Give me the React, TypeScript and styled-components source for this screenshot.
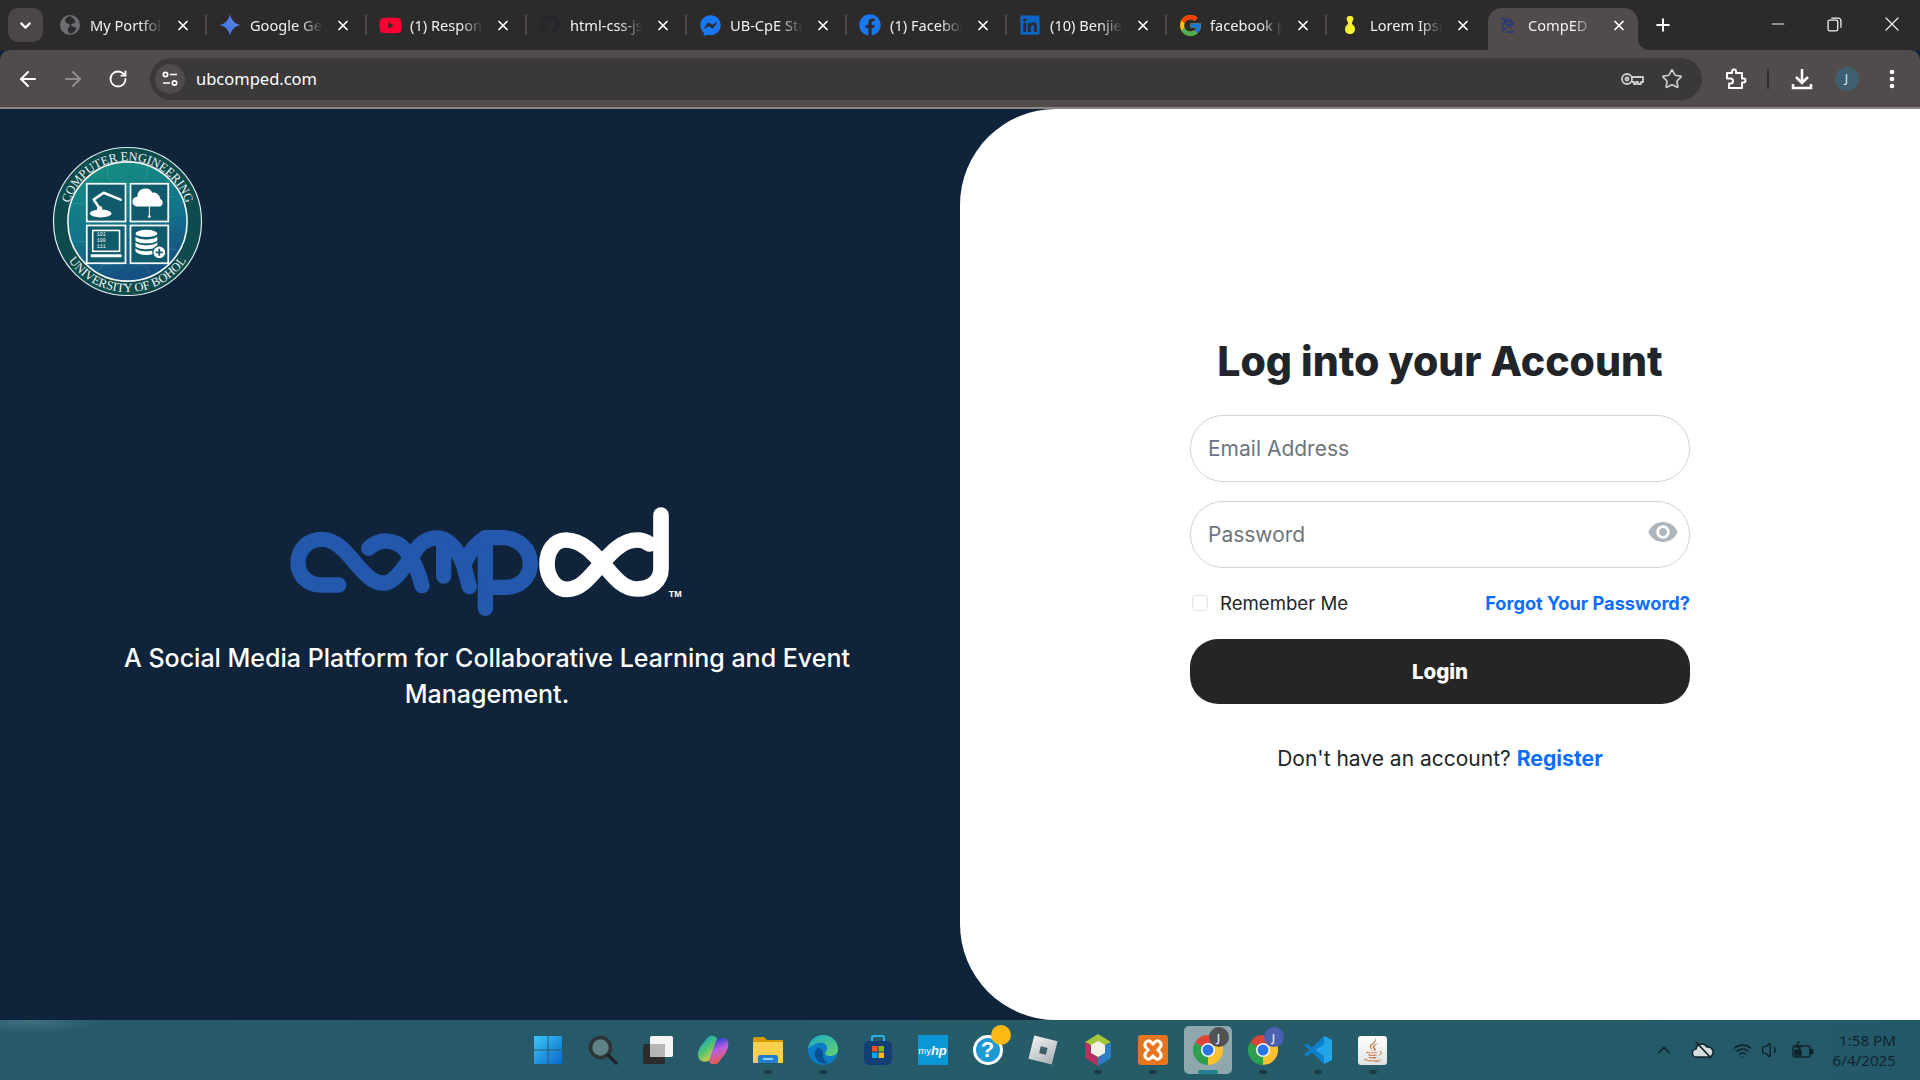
import React from "react";
import styled, { createGlobalStyle } from "styled-components";
import {
  ArrowLeft,
  ArrowRight,
  ChevronDown,
  ChevronUp,
  EllipsisVertical,
  Minus,
  Plus,
  RotateCw,
  Star,
  Volume1,
  Wifi,
  X,
} from "lucide-react";
import { FaFacebook, FaFacebookMessenger, FaGithub, FaJava, FaLinkedin, FaYoutube } from "react-icons/fa";
import { FcGoogle } from "react-icons/fc";
import { MdRemoveRedEye } from "react-icons/md";

const GlobalStyle = createGlobalStyle`
  html, body {
    margin: 0;
    padding: 0;
    width: 1920px;
    height: 1080px;
    overflow: hidden;
    background: #0f233a;
    font-family: Inter, "Noto Sans", sans-serif;
  }
  * { box-sizing: border-box; }
`;

const Screen = styled.div`
  width: 1920px;
  height: 1080px;
  display: flex;
  flex-direction: column;
`;

/* ---- browser chrome ---- */

const TabStrip = styled.div`
  height: 50px;
  flex: none;
  background: #2d2a2b;
  display: flex;
  align-items: flex-end;
  padding-left: 8px;
`;

const TabSearch = styled.button`
  width: 35px;
  height: 34px;
  margin: 0 3px 8px 0;
  padding: 0;
  border: 0;
  border-radius: 10px;
  background: #4b4747;
  color: #fff;
  display: flex;
  align-items: center;
  justify-content: center;
`;

const Tab = styled.div<{ $active?: boolean; $divider?: boolean }>`
  position: relative;
  flex: none;
  display: flex;
  align-items: center;
  height: 42px;
  width: ${({ $active }) => ($active ? "150px" : "160px")};
  margin: ${({ $active }) => ($active ? "0 2px" : "0")};
  padding: ${({ $active }) => ($active ? "0 11px 0 11px" : "0 15px 0 16px")};
  padding-bottom: 8px;
  background: ${({ $active }) => ($active ? "#514c4b" : "transparent")};
  border-radius: 14px 14px 0 0;

  &::after {
    content: "";
    display: ${({ $divider }) => ($divider ? "block" : "none")};
    position: absolute;
    right: -1px;
    top: 7px;
    width: 2px;
    height: 20px;
    background: #4a4646;
  }

  &::before {
    content: "";
    display: ${({ $active }) => ($active ? "block" : "none")};
    position: absolute;
    right: -12px;
    bottom: 0;
    width: 12px;
    height: 12px;
    background: radial-gradient(circle at 100% 0, transparent 12px, #514c4b 12.5px);
  }
`;

const Favicon = styled.span<{ $color?: string }>`
  flex: none;
  width: 16px;
  height: 18px;
  display: flex;
  align-items: center;
  justify-content: center;
  color: ${({ $color }) => $color || "#fff"};

  svg {
    flex: none;
  }
`;

const TabTitle = styled.span<{ $active?: boolean }>`
  flex: 1;
  min-width: 0;
  margin: 0 ${({ $active }) => ($active ? "10px" : "4px")} 0 ${({ $active }) => ($active ? "13px" : "12px")};
  font-family: "Noto Sans", sans-serif;
  font-size: 14.6px;
  color: #f1f0f0;
  white-space: nowrap;
  overflow: hidden;
  mask-image: linear-gradient(90deg, #000 62%, transparent 90%);
`;

const TabClose = styled.span`
  flex: none;
  width: 16px;
  height: 16px;
  display: flex;
  align-items: center;
  justify-content: center;
  color: #fff;
`;

const NewTab = styled.span`
  width: 34px;
  height: 34px;
  margin: 0 0 8px 6px;
  display: flex;
  align-items: center;
  justify-content: center;
  color: #fff;
`;

const WindowControls = styled.div`
  margin-left: auto;
  align-self: flex-start;
  display: flex;
`;

const WindowButton = styled.span`
  width: 57px;
  height: 48px;
  display: flex;
  align-items: center;
  justify-content: center;
  color: #f2f2f2;
`;

const Toolbar = styled.div`
  height: 59px;
  flex: none;
  background: #514c4b;
  border-radius: 10px 10px 0 0;
  border-bottom: 2px solid #8b8684;
  display: flex;
  align-items: center;
  padding: 0 6px 0 5px;
`;

const ToolButton = styled.span<{ $dim?: boolean }>`
  flex: none;
  width: 45px;
  height: 40px;
  display: flex;
  align-items: center;
  justify-content: center;
  color: ${({ $dim }) => ($dim ? "#8f8b8a" : "#fff")};
`;

const Omnibox = styled.div`
  flex: 1;
  height: 42px;
  margin: 0 10px 0 10px;
  padding: 0 14px 0 5px;
  border-radius: 21px;
  background: #3b3838;
  display: flex;
  align-items: center;
`;

const SiteInfo = styled.span`
  flex: none;
  width: 30px;
  height: 30px;
  border-radius: 50%;
  background: #514c4b;
  display: flex;
  align-items: center;
  justify-content: center;
`;

const Url = styled.span`
  flex: 1;
  margin-left: 11px;
  font-family: "Noto Sans", sans-serif;
  font-size: 16.5px;
  color: #fff;
`;

const OmniAction = styled.span<{ $gap?: boolean }>`
  flex: none;
  width: 32px;
  margin-left: ${({ $gap }) => ($gap ? "8px" : "0")};
  display: flex;
  justify-content: center;
  color: #cfcdcc;
`;

const ToolDivider = styled.span`
  flex: none;
  width: 2px;
  height: 20px;
  margin: 0 10px;
  background: #302d2d;
`;

const Avatar = styled.span`
  width: 24px;
  height: 24px;
  border-radius: 50%;
  background: #3f5f70;
  color: #e6eef2;
  font-family: "Noto Sans", sans-serif;
  font-size: 12px;
  display: flex;
  align-items: center;
  justify-content: center;
`;

/* ---- page ---- */

const Page = styled.main`
  flex: 1;
  min-height: 0;
  display: flex;
  background: #0f233a;
`;

const BrandPanel = styled.section`
  width: 960px;
  padding-top: 37px;
  display: flex;
  flex-direction: column;
  align-items: flex-start;
`;

const Seal = styled.svg`
  width: 151px;
  height: 151px;
  margin-left: 52px;
  display: block;
`;

const Brand = styled.div`
  width: 790px;
  margin: 193px 0 0 92px;
  display: flex;
  flex-direction: column;
  align-items: center;
`;

const Wordmark = styled.svg`
  width: 430px;
  height: 140px;
  display: block;
`;

const Tagline = styled.p`
  margin: 10px 0 0;
  color: #fff;
  font-size: 25px;
  font-weight: 500;
  line-height: 36px;
  text-align: center;
`;

const LoginPanel = styled.section`
  width: 960px;
  background: #fff;
  border-radius: 96px 0 0 96px;
  padding-top: 222px;
  display: flex;
  flex-direction: column;
  align-items: center;
`;

const Heading = styled.h1`
  margin: 0 0 24px;
  font-size: 41px;
  line-height: 60px;
  font-weight: 800;
  color: #212529;
`;

const Form = styled.form`
  width: 500px;
  display: flex;
  flex-direction: column;
`;

const Field = styled.div`
  position: relative;
  margin-bottom: 19px;
`;

const Input = styled.input`
  width: 100%;
  height: 67px;
  padding: 0 17px;
  border: 1px solid #ced4da;
  border-radius: 33px;
  background: #fff;
  font-family: inherit;
  font-size: 21px;
  color: #212529;
  outline: none;

  &::placeholder {
    color: #6c757d;
    opacity: 1;
  }
`;

const EyeToggle = styled.span`
  position: absolute;
  right: 11px;
  top: 15px;
  color: #adb5bd;
  display: flex;
`;

const Options = styled.div`
  display: flex;
  align-items: center;
  justify-content: space-between;
  height: 32px;
  margin-bottom: 20px;
`;

const Remember = styled.label`
  display: flex;
  align-items: center;
  padding-left: 2px;
  font-size: 18.6px;
  color: #212529;
`;

const CheckBox = styled.input`
  appearance: none;
  width: 16px;
  height: 16px;
  margin: 0 12px 0 0;
  border: 1px solid #dee2e6;
  border-radius: 4px;
  background: #fff;
`;

const TextLink = styled.a<{ $size: number }>`
  color: #0d6efd;
  font-size: ${({ $size }) => $size}px;
  font-weight: 700;
  text-decoration: none;
`;

const LoginButton = styled.button`
  height: 65px;
  border: 0;
  border-radius: 28px;
  background: #252525;
  color: #fff;
  font-family: inherit;
  font-size: 20.5px;
  font-weight: 800;
`;

const RegisterLine = styled.p`
  margin: 38px 0 0;
  font-size: 21px;
  line-height: 32px;
  text-align: center;
  color: #212529;
`;

/* ---- taskbar ---- */

const Taskbar = styled.footer`
  height: 60px;
  flex: none;
  display: grid;
  grid-template-columns: 1fr 880px 1fr;
  align-items: center;
  background:
    radial-gradient(ellipse 70px 14px at 30px 0, rgba(170, 210, 215, 0.2), transparent),
    linear-gradient(90deg, #27596a 0%, #265b68 60%, #24596a 100%);
`;

const Dock = styled.div`
  grid-column: 2;
  display: flex;
  align-self: stretch;
`;

const DockItem = styled.div<{ $active?: boolean }>`
  position: relative;
  width: 55px;
  display: flex;
  align-items: center;
  justify-content: center;

  &::before {
    content: "";
    display: ${({ $active }) => ($active ? "block" : "none")};
    position: absolute;
    left: 4px;
    right: 3px;
    top: 6px;
    bottom: 6px;
    border-radius: 5px;
    background: #8ea8ad;
  }
`;

const DockGlyph = styled.span`
  position: relative;
  width: 32px;
  height: 32px;
  display: flex;
  align-items: center;
  justify-content: center;
`;

const RunDot = styled.span<{ $active?: boolean }>`
  position: absolute;
  left: 50%;
  bottom: 6px;
  width: ${({ $active }) => ($active ? "20px" : "8px")};
  height: 4px;
  margin-left: ${({ $active }) => ($active ? "-10px" : "-4px")};
  border-radius: 2px;
  background: ${({ $active }) => ($active ? "#22808f" : "#1b3a43")};
`;

const ProfileBadge = styled.span<{ $color: string }>`
  position: absolute;
  right: -5px;
  top: -7px;
  width: 20px;
  height: 20px;
  border-radius: 50%;
  background: ${({ $color }) => $color};
  color: #dfe3f2;
  font-family: "Noto Sans", sans-serif;
  font-size: 11px;
  font-weight: 600;
  display: flex;
  align-items: center;
  justify-content: center;
`;

const Notice = styled.span`
  position: absolute;
  right: -7px;
  top: -9px;
  width: 20px;
  height: 20px;
  border-radius: 50%;
  background: #fdb913;
`;

const HelpGlyph = styled.span`
  width: 30px;
  height: 30px;
  border: 3px solid #fff;
  border-radius: 50%;
  background: #1d9ad6;
  color: #fff;
  font-family: "Liberation Sans", sans-serif;
  font-size: 22px;
  font-weight: 700;
  display: flex;
  align-items: center;
  justify-content: center;
`;

const RobloxGlyph = styled.span`
  width: 24px;
  height: 24px;
  transform: rotate(14deg);
  background: linear-gradient(135deg, #f2f2f2, #a9b2b6);
  display: flex;
  align-items: center;
  justify-content: center;

  &::after {
    content: "";
    width: 7px;
    height: 7px;
    background: #3f5f68;
  }
`;

const HpTile = styled.span`
  width: 30px;
  height: 30px;
  background: #0b96d6;
  color: #fff;
  font-family: "Liberation Sans", sans-serif;
  font-size: 9.5px;
  display: flex;
  align-items: center;
  justify-content: center;
`;

const HpMark = styled.span`
  font-size: 13px;
  font-style: italic;
  font-weight: 700;
`;

const JavaTile = styled.span`
  width: 29px;
  height: 29px;
  border-radius: 3px;
  background: linear-gradient(#fff, #dfe3e4);
  color: #c5662a;
  display: flex;
  align-items: center;
  justify-content: center;
`;

const Tray = styled.div`
  grid-column: 3;
  display: flex;
  align-items: center;
  justify-content: flex-end;
  padding-right: 24px;
  color: #0f2228;
`;

const TraySlot = styled.span<{ $width: number }>`
  width: ${({ $width }) => $width}px;
  display: flex;
  justify-content: center;
`;

const Clock = styled.div`
  margin-left: 13px;
  text-align: right;
  font-family: "Noto Sans", sans-serif;
  font-size: 15.2px;
  line-height: 20px;
  color: #10252d;
`;

/* ---- drawn icons ---- */

const GlobeIcon = () => (
  <svg width="20" height="20" viewBox="0 0 18 18">
    <circle cx="9" cy="9" r="9" fill="#6b6f74" />
    <path d="M9 1c-3 1-5 3-4 5 1 2 3 1 4 3 0 2-2 2-2 5l2 3c3-1 5-2 6-5-2-2-4-1-5-3 0-2 3-1 4-3-1-2-3-4-5-5z" fill="#2d2a2b" />
  </svg>
);

const GeminiIcon = () => (
  <svg width="22" height="22" viewBox="0 0 20 20">
    <defs>
      <linearGradient id="gem" x1="0" y1="1" x2="1" y2="0">
        <stop offset="0" stopColor="#2f7ce6" />
        <stop offset="1" stopColor="#6f7de0" />
      </linearGradient>
    </defs>
    <path d="M10 0c1 5.500 4 9 10 10-6 1-9 4.500-10 10-1-5.500-4-9-10-10 6-1 9-4.500 10-10z" fill="url(#gem)" />
  </svg>
);

const SnapIcon = () => (
  <svg width="14" height="22" viewBox="0 0 14 20">
    <path d="M7 1c3 0 4 2 3 4.500-.6 1.500-1.500 2.500-1 3.500 1 1 3 2 3 5 0 3-2 5-5 5s-5-2-5-5c0-3 2-4 3-5 .5-1-.4-2-1-3.500C3 3 4 1 7 1z" fill="#f5ef2f" />
  </svg>
);

const CompedIcon = () => (
  <svg width="16" height="18" viewBox="0 0 16 18" fill="none" stroke="#283b78" strokeWidth="2">
    <path d="M2 2l5 1-2 4 6-3 3 4-6 1 5 3M3 10l3 3-3 2M7 16h8" />
  </svg>
);

const KeyIcon = () => (
  <svg width="24" height="16" viewBox="0 0 24 16" fill="none" stroke="currentColor" strokeWidth="1.800">
    <circle cx="7" cy="8" r="5" />
    <circle cx="7" cy="8" r="1.500" />
    <path d="M12 6h11v5h-2v2h-3v-2h-2v2h-2v-2h-2" strokeLinejoin="round" />
  </svg>
);

const PuzzleIcon = () => (
  <svg width="24" height="24" viewBox="0 0 24 24" fill="none" stroke="#fff" strokeWidth="2" strokeLinejoin="round">
    <path d="M4 6h5V4.500a2 2 0 0 1 4 0V6h6v5.500h1.500a2 2 0 0 1 0 4H19V21H6v-4.500h1.500a2.500 2.500 0 0 0 0-5H4z" />
  </svg>
);

const DownloadIcon = () => (
  <svg width="24" height="24" viewBox="0 0 24 24" fill="none" stroke="#fff" strokeWidth="2.500">
    <path d="M12 2v13M6 10l6 6 6-6" />
    <path d="M3 17v4h18v-4" />
  </svg>
);

const TuneIcon = () => (
  <svg width="18" height="18" viewBox="0 0 18 18" fill="none" stroke="#fff" strokeWidth="1.700">
    <circle cx="4.500" cy="4.500" r="2.200" />
    <path d="M9 4.500h7M2 13h7" />
    <circle cx="13.500" cy="13" r="2.200" />
  </svg>
);

const RestoreIcon = () => (
  <svg width="15" height="15" viewBox="0 0 14 14" fill="none" stroke="currentColor" strokeWidth="1.200">
    <rect x="1" y="3" width="9" height="10" rx="1.500" />
    <path d="M4 1h6.500A2.500 2.500 0 0 1 13 3.500V10" />
  </svg>
);

const WindowsLogo = () => (
  <svg width="30" height="30" viewBox="0 0 30 30">
    <defs>
      <linearGradient id="win" x1="0" y1="0" x2="1" y2="1">
        <stop offset="0" stopColor="#3cc6fb" />
        <stop offset="1" stopColor="#0869c8" />
      </linearGradient>
    </defs>
    <path d="M1 1h13.500v13.500H1zM15.500 1H29v13.500H15.500zM1 15.500h13.500V29H1zM15.500 15.500H29V29H15.500z" fill="url(#win)" />
  </svg>
);

const SearchGlyph = () => (
  <svg width="30" height="30" viewBox="0 0 30 30">
    <circle cx="12.500" cy="12.500" r="10" fill="#5f8288" stroke="#2e3436" strokeWidth="3.500" />
    <path d="M20 20l8 8" stroke="#1f2527" strokeWidth="3.500" strokeLinecap="round" />
  </svg>
);

const TaskViewGlyph = () => (
  <svg width="32" height="30" viewBox="0 0 32 30">
    <rect x="1" y="9" width="22" height="20" rx="2" fill="#2c2c2c" />
    <rect x="8" y="1" width="23" height="21" rx="2" fill="#f4f4f4" />
    <rect x="8" y="9" width="15" height="13" fill="#b5b5b5" />
  </svg>
);

const CopilotGlyph = () => (
  <svg width="32" height="30" viewBox="0 0 32 30">
    <defs>
      <linearGradient id="copA" x1="0.2" y1="0" x2="0.8" y2="1">
        <stop offset="0" stopColor="#0f9be8" />
        <stop offset="0.5" stopColor="#53c46a" />
        <stop offset="1" stopColor="#f8d040" />
      </linearGradient>
      <linearGradient id="copB" x1="0.3" y1="0" x2="0.6" y2="1">
        <stop offset="0" stopColor="#1b3fd0" />
        <stop offset="0.45" stopColor="#b95fe4" />
        <stop offset="1" stopColor="#f4592f" />
      </linearGradient>
    </defs>
    <path d="M11 2c3-2 8-2 9 2l-7 20c-2 4-9 3-11 0-2-4-1-9 2-13z" fill="url(#copA)" />
    <path d="M21 28c-3 2-8 2-9-2l7-20c2-4 10-4 12 0 1 4 0 8-3 13z" fill="url(#copB)" />
  </svg>
);

const FolderGlyph = () => (
  <svg width="32" height="28" viewBox="0 0 32 28">
    <path d="M1 3a2 2 0 0 1 2-2h9l3 3h16v6H1z" fill="#d99a08" />
    <path d="M1 6h30v20a1 1 0 0 1-1 1H2a1 1 0 0 1-1-1z" fill="#fbd04f" />
    <path d="M8 19h16a2 2 0 0 1 2 2v6H6v-6a2 2 0 0 1 2-2z" fill="#1f7fd0" />
    <rect x="11" y="22" width="10" height="2" fill="#8fd0f5" />
  </svg>
);

const EdgeGlyph = () => (
  <svg width="32" height="32" viewBox="0 0 32 32">
    <defs>
      <linearGradient id="edgeA" x1="0" y1="0" x2="1" y2="1">
        <stop offset="0" stopColor="#1aa7c9" />
        <stop offset="1" stopColor="#66d36e" />
      </linearGradient>
    </defs>
    <circle cx="16" cy="16" r="15" fill="#0c7cc8" />
    <path d="M1 15C2 6 9 1 16 1c8 0 15 6 15 14 0 5-4 7-8 7-3 0-5-1-5-3 1-2 2-2 2-5 0-4-4-6-8-5-6 1-9 4-11 6z" fill="url(#edgeA)" />
    <path d="M11 14c-4 2-5 9 0 13 3 2 7 3 11 2-4-1-7-5-6-9 0-3-2-6-5-6z" fill="#0a4f92" />
  </svg>
);

const StoreGlyph = () => (
  <svg width="30" height="30" viewBox="0 0 30 30">
    <path d="M9 7V3a2 2 0 0 1 2-2h8a2 2 0 0 1 2 2v4" fill="none" stroke="#2bb5e8" strokeWidth="2" />
    <rect x="1" y="6" width="28" height="24" rx="5" fill="#123f74" />
    <rect x="9" y="11" width="5.500" height="5.500" fill="#f25022" />
    <rect x="15.500" y="11" width="5.500" height="5.500" fill="#7fba00" />
    <rect x="9" y="17.500" width="5.500" height="5.500" fill="#00a4ef" />
    <rect x="15.500" y="17.500" width="5.500" height="5.500" fill="#ffb900" />
  </svg>
);

const NetbeansGlyph = () => (
  <svg width="28" height="32" viewBox="0 0 28 32">
    <path d="M14 0l13 8-13 7L1 8z" fill="#a4c639" />
    <path d="M1 8l13 7v17L1 24z" fill="#b5315f" />
    <path d="M27 8L14 15v17l13-8z" fill="#2a7fc4" />
    <path d="M14 7l7 4v8l-7 4-7-4v-8z" fill="#f3f1e4" />
  </svg>
);

const XamppGlyph = () => (
  <svg width="30" height="30" viewBox="0 0 30 30">
    <rect width="30" height="30" rx="3" fill="#e8741e" />
    <path d="M8 7c3-3 5 0 7 2 2-2 4-5 7-2s0 6-2 8c2 2 5 5 2 8s-5 0-7-2c-2 2-4 5-7 2s0-6 2-8C8 13 5 10 8 7z" fill="none" stroke="#fff" strokeWidth="3" />
  </svg>
);

const ChromeGlyph = () => (
  <svg width="30" height="30" viewBox="0 0 24 24">
    <path d="M12 12L1.600 6A12 12 0 0 1 22.400 6z" fill="#db4437" />
    <path d="M12 12L22.400 6A12 12 0 0 1 12 24z" fill="#fbc02d" />
    <path d="M12 12V24A12 12 0 0 1 1.600 6z" fill="#2e9e4f" />
    <circle cx="12" cy="12" r="5.600" fill="#fff" />
    <circle cx="12" cy="12" r="4.400" fill="#2a73e8" />
  </svg>
);

const VscodeGlyph = () => (
  <svg width="30" height="30" viewBox="0 0 30 30">
    <path d="M21 1l8 4v20l-8 4L9 17.500l-5 4-3-2 6-4.500-6-4.500 3-2 5 4z" fill="#0f7fc9" />
    <path d="M21 1l8 4v20l-8 4V9.500L12.500 15 21 21z" fill="#23a5ea" />
  </svg>
);

const CloudOffGlyph = () => (
  <svg width="22" height="18" viewBox="0 0 22 18">
    <path d="M5 16a4 4 0 0 1-1-8 6 6 0 0 1 11-2 5 5 0 0 1 2 10z" fill="#d7dcdc" stroke="#10252d" strokeWidth="1.500" />
    <path d="M4 1l15 16" stroke="#10252d" strokeWidth="1.800" />
  </svg>
);

const BatteryGlyph = () => (
  <svg width="22" height="18" viewBox="0 0 22 18" fill="none" stroke="#0f2228" strokeWidth="1.300">
    <rect x="1" y="5" width="17" height="11" rx="2" />
    <rect x="18" y="8.500" width="2.500" height="4" fill="#0f2228" />
    <rect x="3" y="9" width="6" height="5" fill="#0f2228" />
    <path d="M7 0L4 6h4l-2 5" strokeWidth="1.600" />
  </svg>
);

const Emblem = () => (
  <Seal viewBox="-76 -76 152 152">
    <defs>
      <linearGradient id="sealDisc" x1="0.1" y1="0" x2="0.4" y2="1">
        <stop offset="0" stopColor="#15907e" />
        <stop offset="0.55" stopColor="#12758b" />
        <stop offset="1" stopColor="#155082" />
      </linearGradient>
      <path id="sealTop" d="M-61.500 0A61.500 61.500 0 0 1 61.500 0" />
      <path id="sealBottom" d="M-71 0A71 71 0 0 0 71 0" />
    </defs>
    <circle r="74.500" fill="#0e4b4d" stroke="#dfeeee" strokeWidth="1.200" />
    <circle r="60" fill="url(#sealDisc)" stroke="#f2f7f7" strokeWidth="1.600" />
    <g fill="none" stroke="#7fd0c8" strokeWidth="0.500" opacity="0.45">
      <path d="M-55 -18h10l6-6M-52 20h9l5 5M-20 -54v9l5 5M20 -55v8l-4 5M48 -25h-7l-4 4M50 28h-8l-4 -4M-30 50l6 -7h8M22 52l-5 -8h-7" />
    </g>
    <g fontFamily='"Liberation Serif", serif' fill="#f1f6f6" fontSize="12.500">
      <text textAnchor="middle">
        <textPath href="#sealTop" startOffset="50%">COMPUTER ENGINEERING</textPath>
      </text>
      <text textAnchor="middle">
        <textPath href="#sealBottom" startOffset="50%">UNIVERSITY OF BOHOL</textPath>
      </text>
    </g>
    <g fill="#0f5a6b" stroke="#f4f8f8" strokeWidth="1.800">
      <rect x="-41" y="-38" width="39" height="38" />
      <rect x="3" y="-38" width="38" height="38" />
      <rect x="-41" y="4" width="39" height="38" />
      <rect x="3" y="4" width="38" height="38" />
    </g>
    {/* robot arm */}
    <g fill="none" stroke="#fff" strokeWidth="2.600" strokeLinecap="round" strokeLinejoin="round">
      <path d="M-28 -13L-34 -22L-24 -29L-7 -22" />
    </g>
    <ellipse cx="-27" cy="-8" rx="11" ry="4" fill="#fff" />
    <circle cx="-28" cy="-13" r="2.600" fill="#fff" />
    {/* cloud */}
    <path d="M10 -15a5 5 0 0 1 0 -10 8 8 0 0 1 15 -4 7 7 0 0 1 8 6 4.500 4.500 0 0 1 0 8z" fill="#fff" />
    <path d="M22 -15v10" stroke="#fff" strokeWidth="1" fill="none" />
    <circle cx="22" cy="-5" r="1.400" fill="#fff" />
    {/* monitor */}
    <rect x="-35" y="9" width="27" height="21" fill="none" stroke="#fff" strokeWidth="1.600" />
    <rect x="-37" y="33" width="31" height="3" fill="#fff" />
    <g fill="#fff" fontFamily='"Liberation Mono", monospace' fontSize="5">
      <text x="-31" y="15">101</text>
      <text x="-31" y="21">100</text>
      <text x="-31" y="27">111</text>
    </g>
    {/* database */}
    <g fill="#fff">
      <ellipse cx="19" cy="12" rx="11" ry="3.600" />
      <path d="M8 15c3 4 19 4 22 0v4c-3 4-19 4-22 0z" />
      <path d="M8 21c3 4 19 4 22 0v4c-3 4-19 4-22 0z" />
      <path d="M8 27c3 4 19 4 22 0v3c-3 5-19 5-22 0z" />
      <circle cx="32" cy="31" r="6.500" stroke="#0f5a6b" strokeWidth="1.200" />
    </g>
    <path d="M32 27.500v7M28.500 31h7" stroke="#0f5a6b" strokeWidth="1.800" />
  </Seal>
);

const CompedLogo = () => (
  <Wordmark viewBox="0 0 1290 420">
    <g fill="none" stroke="#2358ad" strokeWidth="46" strokeLinecap="round" strokeLinejoin="round">
      <path d="M200 285H150C105 285 78 255 78 218C78 178 108 148 150 148C195 148 225 190 255 225C285 260 310 285 345 278C375 270 400 225 425 190" />
      <path d="M290 175C320 145 370 145 400 180C425 210 440 245 450 287" />
      <path d="M425 190C445 155 475 140 505 145C535 150 560 185 575 225L592 290" />
      <path d="M515 170V258" />
      <path d="M575 225C590 190 610 160 640 145" />
      <path d="M640 150V355" />
      <path d="M640 143H690C745 143 775 183 775 220C775 262 745 292 700 292H655" />
    </g>
    <g fill="none" stroke="#fff" strokeWidth="47" strokeLinecap="round" strokeLinejoin="round">
      <path d="M1167 75V235C1167 275 1135 297 1095 297C1055 297 1030 265 1000 230C965 190 930 150 882 150C845 150 825 185 825 222C825 262 850 298 885 298C925 298 950 265 985 225C1015 190 1050 150 1095 150C1110 150 1122 154 1132 162" />
    </g>
    <text x="1190" y="322" fill="#fff" fontSize="27" fontWeight="700" fontFamily='"Liberation Sans", sans-serif'>TM</text>
  </Wordmark>
);

const tabs = [
  { title: "My Portfolio", icon: <GlobeIcon /> },
  { title: "Google Gemini", icon: <GeminiIcon /> },
  { title: "(1) Responsive", icon: <FaYoutube size={23} color="#ff0033" /> },
  { title: "html-css-js", icon: <FaGithub size={20} color="#25262b" /> },
  { title: "UB-CpE Students", icon: <FaFacebookMessenger size={21} color="#1877f2" /> },
  { title: "(1) Facebook", icon: <FaFacebook size={22} color="#1877f2" /> },
  { title: "(10) Benjie", icon: <FaLinkedin size={22} color="#0a66c2" /> },
  { title: "facebook post", icon: <FcGoogle size={25} /> },
  { title: "Lorem Ipsum", icon: <SnapIcon /> },
];

export default function App() {
  return (
    <Screen>
      <GlobalStyle />
      <TabStrip>
        <TabSearch type="button">
          <ChevronDown size={17} strokeWidth={3} />
        </TabSearch>
        {tabs.map((tab, index) => (
          <Tab key={tab.title} $divider={index < tabs.length - 1}>
            <Favicon>{tab.icon}</Favicon>
            <TabTitle>{tab.title}</TabTitle>
            <TabClose>
              <X size={17} strokeWidth={2.6} />
            </TabClose>
          </Tab>
        ))}
        <Tab $active>
          <Favicon>
            <CompedIcon />
          </Favicon>
          <TabTitle $active>CompED - Login</TabTitle>
          <TabClose>
            <X size={17} strokeWidth={2.6} />
          </TabClose>
        </Tab>
        <NewTab>
          <Plus size={20} strokeWidth={2.4} />
        </NewTab>
        <WindowControls>
          <WindowButton>
            <Minus size={20} strokeWidth={1.3} />
          </WindowButton>
          <WindowButton>
            <RestoreIcon />
          </WindowButton>
          <WindowButton>
            <X size={24} strokeWidth={1.2} />
          </WindowButton>
        </WindowControls>
      </TabStrip>

      <Toolbar>
        <ToolButton>
          <ArrowLeft size={24} strokeWidth={2} />
        </ToolButton>
        <ToolButton $dim>
          <ArrowRight size={24} strokeWidth={2} />
        </ToolButton>
        <ToolButton>
          <RotateCw size={20} strokeWidth={2.2} />
        </ToolButton>
        <Omnibox>
          <SiteInfo>
            <TuneIcon />
          </SiteInfo>
          <Url>ubcomped.com</Url>
          <OmniAction>
            <KeyIcon />
          </OmniAction>
          <OmniAction $gap>
            <Star size={22} strokeWidth={1.8} />
          </OmniAction>
        </Omnibox>
        <ToolButton>
          <PuzzleIcon />
        </ToolButton>
        <ToolDivider />
        <ToolButton>
          <DownloadIcon />
        </ToolButton>
        <ToolButton>
          <Avatar>J</Avatar>
        </ToolButton>
        <ToolButton>
          <EllipsisVertical size={24} strokeWidth={2.6} />
        </ToolButton>
      </Toolbar>

      <Page>
        <BrandPanel>
          <Emblem />
          <Brand>
            <CompedLogo />
            <Tagline>
              A Social Media Platform for Collaborative Learning and Event
              <br />
              Management.
            </Tagline>
          </Brand>
        </BrandPanel>

        <LoginPanel>
          <Heading>Log into your Account</Heading>
          <Form>
            <Field>
              <Input type="email" placeholder="Email Address" />
            </Field>
            <Field>
              <Input type="password" placeholder="Password" />
              <EyeToggle>
                <MdRemoveRedEye size={32} />
              </EyeToggle>
            </Field>
            <Options>
              <Remember>
                <CheckBox type="checkbox" />
                Remember Me
              </Remember>
              <TextLink href="#" $size={18.2}>
                Forgot Your Password?
              </TextLink>
            </Options>
            <LoginButton type="button">Login</LoginButton>
            <RegisterLine>
              Don't have an account?{" "}
              <TextLink href="#" $size={21.2}>
                Register
              </TextLink>
            </RegisterLine>
          </Form>
        </LoginPanel>
      </Page>

      <Taskbar>
        <Dock>
          <DockItem>
            <DockGlyph>
              <WindowsLogo />
            </DockGlyph>
          </DockItem>
          <DockItem>
            <DockGlyph>
              <SearchGlyph />
            </DockGlyph>
          </DockItem>
          <DockItem>
            <DockGlyph>
              <TaskViewGlyph />
            </DockGlyph>
          </DockItem>
          <DockItem>
            <DockGlyph>
              <CopilotGlyph />
            </DockGlyph>
          </DockItem>
          <DockItem>
            <DockGlyph>
              <FolderGlyph />
            </DockGlyph>
            <RunDot />
          </DockItem>
          <DockItem>
            <DockGlyph>
              <EdgeGlyph />
            </DockGlyph>
            <RunDot />
          </DockItem>
          <DockItem>
            <DockGlyph>
              <StoreGlyph />
            </DockGlyph>
          </DockItem>
          <DockItem>
            <DockGlyph>
              <HpTile>
                my<HpMark>hp</HpMark>
              </HpTile>
            </DockGlyph>
          </DockItem>
          <DockItem>
            <DockGlyph>
              <HelpGlyph>?</HelpGlyph>
              <Notice />
            </DockGlyph>
          </DockItem>
          <DockItem>
            <DockGlyph>
              <RobloxGlyph />
            </DockGlyph>
          </DockItem>
          <DockItem>
            <DockGlyph>
              <NetbeansGlyph />
            </DockGlyph>
            <RunDot />
          </DockItem>
          <DockItem>
            <DockGlyph>
              <XamppGlyph />
            </DockGlyph>
            <RunDot />
          </DockItem>
          <DockItem $active>
            <DockGlyph>
              <ChromeGlyph />
              <ProfileBadge $color="#4f5356">J</ProfileBadge>
            </DockGlyph>
            <RunDot $active />
          </DockItem>
          <DockItem>
            <DockGlyph>
              <ChromeGlyph />
              <ProfileBadge $color="#4d5fb0">J</ProfileBadge>
            </DockGlyph>
            <RunDot />
          </DockItem>
          <DockItem>
            <DockGlyph>
              <VscodeGlyph />
            </DockGlyph>
            <RunDot />
          </DockItem>
          <DockItem>
            <DockGlyph>
              <JavaTile>
                <FaJava size={24} />
              </JavaTile>
            </DockGlyph>
            <RunDot />
          </DockItem>
        </Dock>
        <Tray>
          <TraySlot $width={24}>
            <ChevronUp size={20} strokeWidth={1.8} />
          </TraySlot>
          <TraySlot $width={54}>
            <CloudOffGlyph />
          </TraySlot>
          <TraySlot $width={26}>
            <Wifi size={19} strokeWidth={1.8} />
          </TraySlot>
          <TraySlot $width={30}>
            <Volume1 size={20} strokeWidth={1.6} />
          </TraySlot>
          <TraySlot $width={34}>
            <BatteryGlyph />
          </TraySlot>
          <Clock>
            1:58 PM
            <br />
            6/4/2025
          </Clock>
        </Tray>
      </Taskbar>
    </Screen>
  );
}
